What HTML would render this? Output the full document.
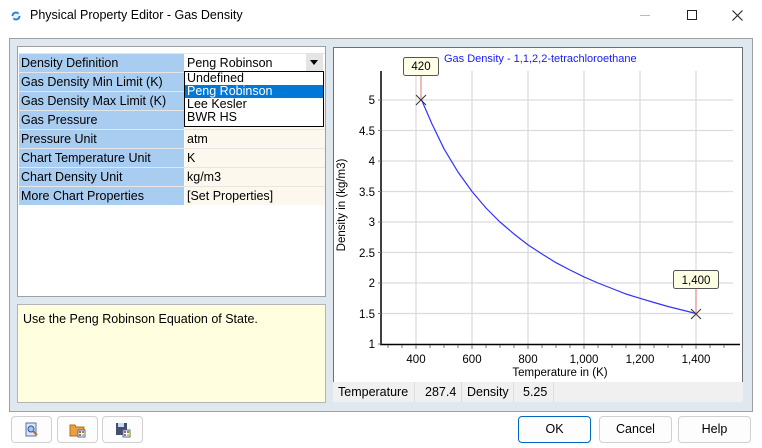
<!DOCTYPE html>
<html><head><meta charset="utf-8"><style>
*{box-sizing:border-box;margin:0;padding:0}
body{width:762px;height:448px;background:#fff;font-family:"Liberation Sans",sans-serif;font-size:12px;color:#000;position:relative;overflow:hidden}
.abs{position:absolute}
.title{left:0;top:0;width:762px;height:32px;background:#fff}
.panel{left:9px;top:38px;width:744px;height:374px;background:#dfe7ef;border:1px solid #a0a0a0}
.grid{left:17px;top:46px;width:309px;height:251px;background:#fff;border:1px solid #a0a0a0}
.row{position:absolute;left:1px;width:306px;height:19px;border-top:1px solid #e6e6e6}
.lab{position:absolute;left:0;top:0;width:165px;height:18px;background:#a9cdf0;padding:2px 0 0 2px;font-size:12.5px}
.val{position:absolute;left:166px;top:0;width:140px;height:18px;background:#fdf8ee;padding:2px 0 0 2px;font-size:12.5px}
.btn{position:absolute;top:416px;height:27px;border:1px solid #d0d0d0;border-radius:4px;background:#fdfdfd;text-align:center;line-height:25px;font-size:12.5px}
</style></head><body>
<div class="abs title">
 <svg class="abs" style="left:10px;top:10px" width="12" height="12" viewBox="0 0 12 12"><circle cx="6" cy="6" r="5" fill="#e8f2fc"/><path d="M2.5 6a3.5 3.5 0 0 1 6-2.4M9.5 6a3.5 3.5 0 0 1-6 2.4" stroke="#1a7fd6" stroke-width="1.8" fill="none"/></svg>
 <div class="abs" style="left:30px;top:8px;font-size:12.5px">Physical Property Editor - Gas Density</div>
 <div class="abs" style="left:640px;top:15px;width:10px;height:1px;background:#bbb"></div>
 <div class="abs" style="left:687px;top:10px;width:10px;height:10px;border:1px solid #222"></div>
 <svg class="abs" style="left:732px;top:10px" width="11" height="11"><path d="M0.5 0.5L10.5 10.5M10.5 0.5L0.5 10.5" stroke="#222" stroke-width="1.1"/></svg>
</div>
<div class="abs panel"></div>
<div class="abs grid">
 <div class="row" style="top:6px"><div class="lab">Density Definition</div><div class="val" style="background:#fff">Peng Robinson</div></div>
 <div class="row" style="top:25px"><div class="lab">Gas Density Min Limit (K)</div><div class="val"></div></div>
 <div class="row" style="top:44px"><div class="lab">Gas Density Max Limit (K)</div><div class="val"></div></div>
 <div class="row" style="top:63px"><div class="lab">Gas Pressure</div><div class="val"></div></div>
 <div class="row" style="top:82px"><div class="lab">Pressure Unit</div><div class="val">atm</div></div>
 <div class="row" style="top:101px"><div class="lab">Chart Temperature Unit</div><div class="val">K</div></div>
 <div class="row" style="top:120px"><div class="lab">Chart Density Unit</div><div class="val">kg/m3</div></div>
 <div class="row" style="top:139px"><div class="lab">More Chart Properties</div><div class="val">[Set Properties]</div></div>
</div>
<div class="abs" style="left:306px;top:53px;width:17px;height:18px;background:#e4e4e4"><div class="abs" style="left:4px;top:7px;border-left:4.5px solid transparent;border-right:4.5px solid transparent;border-top:5px solid #000"></div></div>
<div class="abs" style="left:184px;top:71px;width:140px;height:56px;background:#fff;border:1px solid #000;font-size:12.5px;line-height:13px">
 <div style="padding-left:2px">Undefined</div>
 <div style="padding-left:2px;background:#0078d7;color:#fff">Peng Robinson</div>
 <div style="padding-left:2px">Lee Kesler</div>
 <div style="padding-left:2px">BWR HS</div>
</div>
<div class="abs" style="left:17px;top:304px;width:309px;height:99px;background:#ffffe0;border:1px solid #b4b4b4;padding:7px 0 0 5px;font-size:12.5px">Use the Peng Robinson Equation of State.</div>
<div class="abs" style="left:333px;top:47px;width:410px;height:336px;background:#fff;border:1px solid #707070"></div>
<div class="abs" style="left:333px;top:382px;width:410px;height:20px;background:#f0f0f0;font-size:12.5px">
 <div class="abs" style="left:5px;top:3px">Temperature</div>
 <div class="abs" style="left:81px;top:0;width:1px;height:20px;background:#ddd"></div>
 <div class="abs" style="left:92px;top:3px">287.4</div>
 <div class="abs" style="left:128px;top:0;width:1px;height:20px;background:#ddd"></div>
 <div class="abs" style="left:134px;top:3px">Density</div>
 <div class="abs" style="left:180px;top:0;width:1px;height:20px;background:#ddd"></div>
 <div class="abs" style="left:190px;top:3px">5.25</div>
 <div class="abs" style="left:220px;top:0;width:1px;height:20px;background:#ddd"></div>
</div>
<svg class="abs" style="left:0;top:0" width="762" height="448" font-family="Liberation Sans, sans-serif">
 <g stroke="#dcdcdc" stroke-width="1.3">
  <line x1="416" y1="71" x2="416" y2="344"/><line x1="472" y1="71" x2="472" y2="344"/><line x1="528" y1="71" x2="528" y2="344"/><line x1="584" y1="71" x2="584" y2="344"/><line x1="640" y1="71" x2="640" y2="344"/><line x1="696" y1="71" x2="696" y2="344"/>
  <line x1="381" y1="100" x2="733" y2="100"/><line x1="381" y1="130.5" x2="733" y2="130.5"/><line x1="381" y1="161" x2="733" y2="161"/><line x1="381" y1="191.5" x2="733" y2="191.5"/><line x1="381" y1="222" x2="733" y2="222"/><line x1="381" y1="252.5" x2="733" y2="252.5"/><line x1="381" y1="283" x2="733" y2="283"/><line x1="381" y1="313.5" x2="733" y2="313.5"/>
 </g>
 <line x1="381" y1="71" x2="381" y2="345" stroke="#000" stroke-width="1.5"/>
 <line x1="380" y1="344.5" x2="740" y2="344.5" stroke="#000" stroke-width="1.5"/>
 <g stroke="#777" stroke-width="1">
  <path d="M378 100h3M378 130.5h3M378 161h3M378 191.5h3M378 222h3M378 252.5h3M378 283h3M378 313.5h3M378 344h3"/>
  <path d="M388 345v3M402 345v3M416 345v4M430 345v3M444 345v3M458 345v3M472 345v4M486 345v3M500 345v3M514 345v3M528 345v4M542 345v3M556 345v3M570 345v3M584 345v4M598 345v3M612 345v3M626 345v3M640 345v4M654 345v3M668 345v3M682 345v3M696 345v4M710 345v3M724 345v3"/>
 </g>
 <g font-size="11.5" fill="#000" text-anchor="end">
  <text x="375" y="104">5</text><text x="375" y="135">4.5</text><text x="375" y="165">4</text><text x="375" y="196">3.5</text><text x="375" y="226">3</text><text x="375" y="257">2.5</text><text x="375" y="287">2</text><text x="375" y="318">1.5</text><text x="375" y="348">1</text>
 </g>
 <g font-size="11.5" fill="#000" text-anchor="middle">
  <text x="416" y="363">400</text><text x="472" y="363">600</text><text x="528" y="363">800</text><text x="584" y="363">1,000</text><text x="640" y="363">1,200</text><text x="696" y="363">1,400</text>
  <text x="560" y="376">Temperature in (K)</text>
 </g>
 <text transform="translate(345,205) rotate(-90)" font-size="11.5" text-anchor="middle">Density in (kg/m3)</text>
 <text x="444" y="62" font-size="11" fill="#1a1aff">Gas Density - 1,1,2,2-tetrachloroethane</text>
 <polyline fill="none" stroke="#3333ff" stroke-width="1.2" points="421.6,100 432,124 444,148.8 458,172 472,191.5 486,208 500,222 514,234 528,244.9 542,254 556,262.7 570,270 584,276.9 598,283 612,288.5 626,294 640,298.3 654,302.5 668,306.5 682,310 696,313.5"/>
 <line x1="421" y1="76" x2="421" y2="100" stroke="#f0a0a0" stroke-width="1.5"/>
 <line x1="696" y1="288" x2="696" y2="314" stroke="#f0a0a0" stroke-width="1.5"/>
 <path d="M416 95l10 10M426 95l-10 10M691 309l10 10M701 309l-10 10" stroke="#333" stroke-width="1"/>
 <rect x="403.5" y="57.5" width="35" height="18" rx="2" fill="#ffffe6" stroke="#555"/>
 <text x="421" y="70" font-size="11.5" text-anchor="middle">420</text>
 <rect x="673.5" y="270.5" width="45" height="18" rx="2" fill="#ffffe6" stroke="#555"/>
 <text x="696" y="284" font-size="11.5" text-anchor="middle">1,400</text>
</svg>
<div class="btn" style="left:11px;width:41px"><svg width="16" height="16" style="margin-top:5px" viewBox="0 0 16 16"><rect x="2" y="1" width="10" height="13" fill="#dce6f8" stroke="#5570b0"/><circle cx="7" cy="7" r="3" fill="#9cc8f0" stroke="#30508c"/><path d="M9 9l4 4" stroke="#b07030" stroke-width="2"/></svg></div>
<div class="btn" style="left:57px;width:41px"><svg width="18" height="16" style="margin-top:5px" viewBox="0 0 18 16"><path d="M1 3h5l1 2h8v9H1z" fill="#e8a040" stroke="#b07020"/><rect x="9" y="8" width="7" height="7" fill="#fff" stroke="#668"/><rect x="10" y="9" width="2" height="2" fill="#e44"/><rect x="13" y="9" width="2" height="2" fill="#4a4"/><rect x="10" y="12" width="2" height="2" fill="#48e"/><rect x="13" y="12" width="2" height="2" fill="#eb3"/></svg></div>
<div class="btn" style="left:102px;width:41px"><svg width="18" height="16" style="margin-top:5px" viewBox="0 0 18 16"><rect x="2" y="1" width="11" height="12" fill="#405070"/><rect x="4" y="1" width="6" height="4" fill="#cfd8e8"/><rect x="9" y="8" width="7" height="7" fill="#fff" stroke="#668"/><rect x="10" y="9" width="2" height="2" fill="#e44"/><rect x="13" y="9" width="2" height="2" fill="#4a4"/><rect x="10" y="12" width="2" height="2" fill="#48e"/><rect x="13" y="12" width="2" height="2" fill="#eb3"/></svg></div>
<div class="btn" style="left:518px;width:73px;border-color:#0067c0">OK</div>
<div class="btn" style="left:599px;width:73px">Cancel</div>
<div class="btn" style="left:678px;width:73px">Help</div>
</body></html>
